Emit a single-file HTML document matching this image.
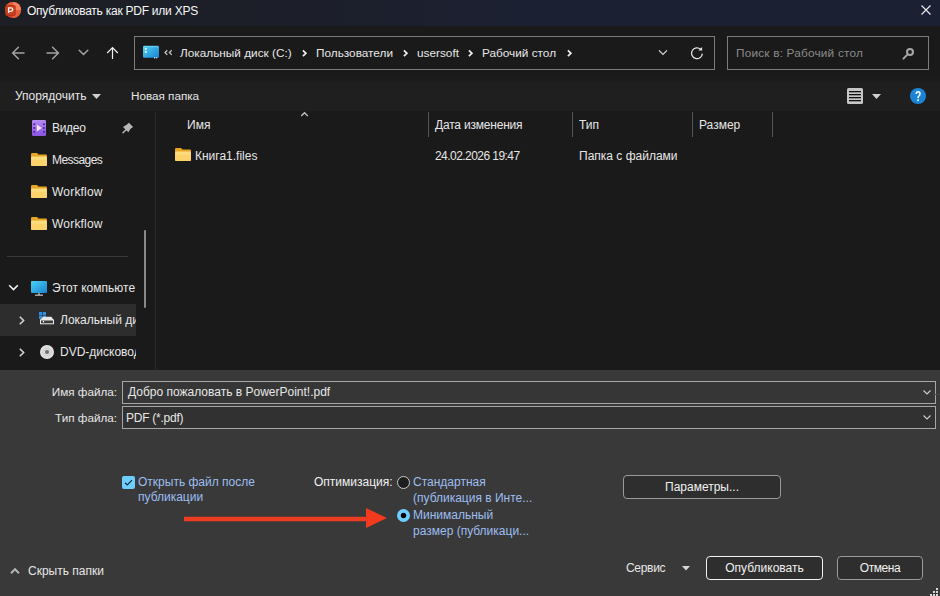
<!DOCTYPE html>
<html><head><meta charset="utf-8">
<style>
*{margin:0;padding:0;box-sizing:border-box}
html,body{width:940px;height:596px;overflow:hidden;background:#191919}
body{position:relative;font-family:"Liberation Sans",sans-serif;font-size:12px;color:#e6e6e6}
.a{position:absolute;white-space:nowrap;line-height:14px}
svg{position:absolute;overflow:visible}
#title{position:absolute;left:0;top:0;width:940px;height:26px;background:linear-gradient(90deg,#1e1f24 0%,#1c1f29 30%,#1b2033 60%,#1b2033 100%)}
#nav{position:absolute;left:0;top:26px;width:940px;height:54px;background:#1a1a1a}
#tool{position:absolute;left:0;top:76px;width:940px;height:35px;background:linear-gradient(180deg,#1a1a1a 0px,#1f1f1f 8px,#1f1f1f 100%)}
#content{position:absolute;left:0;top:111px;width:940px;height:259px;background:#1a1a1a}
#bottom{position:absolute;left:0;top:370px;width:940px;height:226px;background:#393939}
.box{position:absolute;border:1px solid #7c7c7c}
.inp{position:absolute;border:1px solid #a6a6a6;background:#343434}
.btn{position:absolute;border:1px solid #9a9a9a;border-radius:4px;background:#2e2e2e;text-align:center;color:#f0f0f0}
.blue{color:#9cbdf0}
</style></head><body>
<div id="title"></div>
<div id="nav"></div>
<div id="tool"></div>
<div id="content"></div>
<div id="bottom"></div>

<!-- title -->
<svg style="left:4px;top:1px" width="18" height="18" viewBox="0 0 18 18">
  <circle cx="9" cy="9" r="8.1" fill="#d9472a"/>
  <path d="M9 0.9A8.1 8.1 0 0 1 17.1 9H9Z" fill="#f3825f"/>
  <path d="M9 9H17.1A8.1 8.1 0 0 1 9 17.1Z" fill="#e3603f"/>
  <path d="M9 0.9A8.1 8.1 0 0 0 0.9 9H9Z" fill="#e45d3d"/>
  <rect x="1.8" y="4.6" width="9.4" height="9.8" rx="0.8" fill="#c8401f" stroke="#a92d14" stroke-width="0.8"/>
  <path d="M4.6 12V6.9H6.9Q8.8 6.9 8.8 8.6Q8.8 10.3 6.9 10.3H4.6" stroke="#fff5f0" stroke-width="1.3" fill="none"/>
</svg>
<div class="a" style="left:27px;top:4px;font-size:12px;letter-spacing:-0.24px;color:#f6f6f6">Опубликовать как PDF или XPS</div>
<svg style="left:921px;top:5px" width="10" height="10"><path d="M0.5 0.5L9.5 9.5M9.5 0.5L0.5 9.5" stroke="#f0f0f0" stroke-width="1.1"/></svg>

<!-- nav arrows -->
<svg style="left:8px;top:42px" width="56" height="22" viewBox="0 0 56 22"><path d="M16 11H4.8M10.4 5.2L4.6 11L10.4 16.8M39 11H50.2M44.6 5.2L50.4 11L44.6 16.8" stroke="#a2a2a2" stroke-width="1.5" fill="none" stroke-linecap="round"/></svg>
<svg style="left:76px;top:46px" width="14" height="12" viewBox="0 0 14 12"><path d="M3.2 4.2L7.5 8.5L11.8 4.2" stroke="#a2a2a2" stroke-width="1.5" fill="none" stroke-linecap="round"/></svg>
<svg style="left:106px;top:46px" width="14" height="14" viewBox="0 0 14 14"><path d="M6.5 13V1.8M1.2 7L6.5 1.7L11.8 7" stroke="#f0f0f0" stroke-width="1.2" fill="none"/></svg>

<!-- address -->
<div class="box" style="left:134px;top:36px;width:581px;height:34px"></div>
<svg style="left:143px;top:45px" width="17" height="14" viewBox="0 0 17 14"><defs><linearGradient id="ag" x1="0" y1="0" x2="1" y2="1"><stop offset="0" stop-color="#4fd2ef"/><stop offset="1" stop-color="#1a80d6"/></linearGradient></defs><rect x="0" y="0.8" width="16" height="12" rx="1.2" fill="url(#ag)"/><rect x="0.8" y="1.2" width="14.4" height="1" fill="#8ae4f8" opacity="0.6"/><rect x="1.8" y="3" width="2" height="1.8" fill="#d8f8ff"/><rect x="1.8" y="6" width="2" height="1.8" fill="#d8f8ff"/><rect x="11" y="12.2" width="1.2" height="1.2" fill="#cfefff"/><rect x="13" y="12.2" width="1.2" height="1.2" fill="#cfefff"/></svg>
<svg style="left:163px;top:49px" width="11" height="7" viewBox="0 0 11 7"><path d="M4.3 1.2L2 3.5L4.3 5.8M8.7 1.2L6.4 3.5L8.7 5.8" stroke="#c0c0c0" stroke-width="1.3" fill="none"/></svg>
<div class="a" style="left:180px;top:46px;font-size:11.8px">Локальный диск (C:)</div>
<svg style="left:302px;top:49px" width="5" height="8"><path d="M0.9 1.4L3.9 4.3L0.9 7.2" stroke="#ececec" stroke-width="1.75" fill="none"/></svg>
<div class="a" style="left:316px;top:46px;font-size:11.8px">Пользователи</div>
<svg style="left:403px;top:49px" width="5" height="8"><path d="M0.9 1.4L3.9 4.3L0.9 7.2" stroke="#ececec" stroke-width="1.75" fill="none"/></svg>
<div class="a" style="left:417px;top:46px;font-size:11.8px">usersoft</div>
<svg style="left:468px;top:49px" width="5" height="8"><path d="M0.9 1.4L3.9 4.3L0.9 7.2" stroke="#ececec" stroke-width="1.75" fill="none"/></svg>
<div class="a" style="left:482px;top:46px;font-size:11.8px">Рабочий стол</div>
<svg style="left:567px;top:49px" width="5" height="8"><path d="M0.9 1.4L3.9 4.3L0.9 7.2" stroke="#ececec" stroke-width="1.75" fill="none"/></svg>
<svg style="left:657px;top:48px" width="12" height="9" viewBox="0 0 12 9"><path d="M2 2.3L6 6.3L10 2.3" stroke="#dcdcdc" stroke-width="1.2" fill="none"/></svg>
<svg style="left:688px;top:44px" width="18" height="18" viewBox="0 0 18 18"><path d="M14.36 9.66A5.4 5.4 0 1 1 12.6 5.2" stroke="#e6e6e6" stroke-width="1.25" fill="none"/><path d="M14.1 2.9V6.6H10.4Z" fill="#e6e6e6"/></svg>

<!-- search -->
<div class="box" style="left:727px;top:36px;width:202px;height:34px"></div>
<div class="a" style="left:736px;top:46px;font-size:11.8px;letter-spacing:0.2px;color:#8a8a8a">Поиск в: Рабочий стол</div>
<svg style="left:898px;top:44px" width="20" height="20" viewBox="0 0 20 20"><circle cx="12" cy="8" r="2.95" stroke="#a6a6a6" stroke-width="2.1" fill="none"/><path d="M9.6 10.4L5.4 14.6" stroke="#a6a6a6" stroke-width="2" stroke-linecap="round"/></svg>

<!-- toolbar -->
<div class="a" style="left:15px;top:89px;font-size:12px">Упорядочить</div>
<svg style="left:92px;top:94px" width="9" height="5"><path d="M0 0H9L4.5 5Z" fill="#cfcfcf"/></svg>
<div class="a" style="left:131px;top:89px;font-size:11.7px">Новая папка</div>
<svg style="left:847px;top:88px" width="16" height="16" viewBox="0 0 16 16"><rect x="0" y="0" width="16" height="16" rx="1.5" fill="#c6c6c6"/><rect x="2" y="3" width="12" height="1.3" fill="#111"/><rect x="2" y="6" width="12" height="1.3" fill="#111"/><rect x="2" y="9" width="12" height="1.3" fill="#111"/><rect x="2" y="12" width="12" height="1.3" fill="#111"/></svg>
<svg style="left:872px;top:94px" width="9" height="5"><path d="M0 0H9L4.5 5Z" fill="#d0d0d0"/></svg>
<svg style="left:910px;top:88px" width="16" height="16" viewBox="0 0 16 16"><circle cx="8" cy="8" r="8" fill="#1b84d6"/><path d="M6.2 6Q6.2 3.7 8.1 3.7Q10 3.7 10 5.8Q10 7.1 9 7.8Q8.1 8.4 8.1 9.5V10.3" stroke="#fff" stroke-width="1.5" fill="none"/><rect x="7.3" y="11.4" width="1.6" height="1.7" fill="#fff"/></svg>

<!-- nav pane -->
<svg style="left:32px;top:120px" width="14" height="16" viewBox="0 0 14 16"><defs><linearGradient id="vg" x1="0" y1="0" x2="0" y2="1"><stop offset="0" stop-color="#b48cf2"/><stop offset="1" stop-color="#8a52e0"/></linearGradient></defs><rect x="0" y="0" width="14" height="16" rx="1.2" fill="url(#vg)"/><g fill="#4a1c9a"><rect x="1.4" y="3.4" width="1.8" height="1.6"/><rect x="1.4" y="7.2" width="1.8" height="1.6"/><rect x="1.4" y="11" width="1.8" height="1.6"/><rect x="11" y="3.4" width="1.8" height="1.6"/><rect x="11" y="7.2" width="1.8" height="1.6"/><rect x="11" y="11" width="1.8" height="1.6"/></g><path d="M4.8 4.6L9.8 8L4.8 11.4Z" fill="#f6eaff"/></svg>
<div class="a" style="left:52px;top:121px;letter-spacing:-0.3px">Видео</div>
<svg style="left:116px;top:116px" width="24" height="24" viewBox="0 0 24 24"><path d="M12.9 6.8L17.1 11L14.6 12.8L12.3 16.2L7 11L10.6 8.8Z" fill="#b6b6b6"/><path d="M10 13.8L7 16.8" stroke="#b6b6b6" stroke-width="1.5" stroke-linecap="round"/></svg>

<svg style="left:31px;top:153px" width="16" height="13" viewBox="0 0 16 13"><path d="M0 1.2Q0 0 1.2 0H6L7.5 1.5H14.8Q16 1.5 16 2.7V11.8Q16 13 14.8 13H1.2Q0 13 0 11.8Z" fill="#e8a523"/><rect x="0" y="3.4" width="16" height="9.6" rx="1.2" fill="#fbd36a"/><rect x="0.6" y="3.8" width="14.8" height="3" rx="1" fill="#fde08a" opacity="0.7"/></svg>
<div class="a" style="left:52px;top:153px;letter-spacing:-0.55px">Messages</div>
<svg style="left:31px;top:185px" width="16" height="13" viewBox="0 0 16 13"><path d="M0 1.2Q0 0 1.2 0H6L7.5 1.5H14.8Q16 1.5 16 2.7V11.8Q16 13 14.8 13H1.2Q0 13 0 11.8Z" fill="#e8a523"/><rect x="0" y="3.4" width="16" height="9.6" rx="1.2" fill="#fbd36a"/><rect x="0.6" y="3.8" width="14.8" height="3" rx="1" fill="#fde08a" opacity="0.7"/></svg>
<div class="a" style="left:52px;top:185px;letter-spacing:0.2px">Workflow</div>
<svg style="left:31px;top:217px" width="16" height="13" viewBox="0 0 16 13"><path d="M0 1.2Q0 0 1.2 0H6L7.5 1.5H14.8Q16 1.5 16 2.7V11.8Q16 13 14.8 13H1.2Q0 13 0 11.8Z" fill="#e8a523"/><rect x="0" y="3.4" width="16" height="9.6" rx="1.2" fill="#fbd36a"/><rect x="0.6" y="3.8" width="14.8" height="3" rx="1" fill="#fde08a" opacity="0.7"/></svg>
<div class="a" style="left:52px;top:217px;letter-spacing:0.2px">Workflow</div>

<div style="position:absolute;left:7px;top:256px;width:121px;height:1px;background:#3a3a3a"></div>

<svg style="left:8px;top:284px" width="11" height="8"><path d="M1.2 1.2L5.5 5.5L9.8 1.2" stroke="#f2f2f2" stroke-width="1.6" fill="none"/></svg>
<svg style="left:31px;top:281px" width="16" height="15" viewBox="0 0 16 15"><defs><linearGradient id="mg" x1="0" y1="0" x2="1" y2="1"><stop offset="0" stop-color="#4cd0f2"/><stop offset="1" stop-color="#1784d4"/></linearGradient></defs><rect x="0" y="0" width="16" height="12" rx="1" fill="url(#mg)"/><rect x="7.4" y="12" width="1.2" height="2" fill="#c8c8c8"/><rect x="4" y="13.6" width="8" height="1.1" fill="#d8d8d8"/></svg>
<div style="position:absolute;left:52px;top:281px;width:84px;height:14px;overflow:hidden"><div class="a" style="left:0;top:0">Этот компьюте</div></div>

<div style="position:absolute;left:0;top:304px;width:136px;height:32px;background:#2d2d2d"></div>
<svg style="left:19px;top:316px" width="6" height="9"><path d="M0.8 0.8L4.6 4.5L0.8 8.2" stroke="#d2d2d2" stroke-width="1.6" fill="none"/></svg>
<svg style="left:36px;top:308px" width="22" height="20" viewBox="0 0 22 20"><g fill="#2f8ee0"><rect x="3" y="4" width="3.2" height="3.2"/><rect x="6.8" y="4" width="3.2" height="3.2"/><rect x="3" y="7.6" width="3.2" height="3.2"/><rect x="6.8" y="7.6" width="3.2" height="3.2"/></g><path d="M4.4 12L6.8 8.7H15.4L17.6 12Z" fill="#e6e6e6"/><rect x="4.5" y="12" width="13" height="3.8" fill="#3a3a3a" stroke="#e8e8e8" stroke-width="1"/><rect x="6.8" y="13" width="1.3" height="1.3" fill="#fff"/></svg>
<div style="position:absolute;left:60px;top:313px;width:76px;height:14px;overflow:hidden"><div class="a" style="left:0;top:0">Локальный диск (C:)</div></div>

<svg style="left:19px;top:348px" width="6" height="9"><path d="M0.8 0.8L4.6 4.5L0.8 8.2" stroke="#d2d2d2" stroke-width="1.6" fill="none"/></svg>
<svg style="left:40px;top:345px" width="14" height="14" viewBox="0 0 14 14"><circle cx="7" cy="7" r="7" fill="#e4e4e4"/><circle cx="7" cy="7" r="5.5" fill="#d6d6d6"/><circle cx="7" cy="7" r="2" fill="#6e6e6e"/></svg>
<div style="position:absolute;left:60px;top:345px;width:76px;height:14px;overflow:hidden"><div class="a" style="left:0;top:0">DVD-дисковод (D:)</div></div>

<!-- scrollbar + divider -->
<div style="position:absolute;left:144px;top:230px;width:2px;height:78px;background:#8a8a8a;border-radius:1px"></div>
<div style="position:absolute;left:155px;top:112px;width:1px;height:258px;background:#2a2a2a"></div>

<!-- columns -->
<svg style="left:299px;top:110px" width="12" height="8"><path d="M2.2 6L5.5 2.7L8.8 6" stroke="#c4c4c4" stroke-width="1.3" fill="none"/></svg>
<div class="a" style="left:187px;top:118px">Имя</div>
<div style="position:absolute;left:428px;top:112px;width:1px;height:25px;background:#555"></div>
<div class="a" style="left:435px;top:118px;letter-spacing:-0.2px">Дата изменения</div>
<div style="position:absolute;left:572px;top:112px;width:1px;height:25px;background:#555"></div>
<div class="a" style="left:579px;top:118px">Тип</div>
<div style="position:absolute;left:692px;top:112px;width:1px;height:25px;background:#555"></div>
<div class="a" style="left:699px;top:118px">Размер</div>
<div style="position:absolute;left:772px;top:112px;width:1px;height:25px;background:#555"></div>

<svg style="left:175px;top:148px" width="16" height="13" viewBox="0 0 16 13"><path d="M0 1.2Q0 0 1.2 0H6L7.5 1.5H14.8Q16 1.5 16 2.7V11.8Q16 13 14.8 13H1.2Q0 13 0 11.8Z" fill="#e8a523"/><rect x="0" y="3.4" width="16" height="9.6" rx="1.2" fill="#fbd36a"/><rect x="0.6" y="3.8" width="14.8" height="3" rx="1" fill="#fde08a" opacity="0.7"/></svg>
<div class="a" style="left:195px;top:149px">Книга1.files</div>
<div class="a" style="left:435px;top:149px;letter-spacing:-0.55px">24.02.2026 19:47</div>
<div class="a" style="left:579px;top:149px">Папка с файлами</div>

<!-- bottom -->
<div class="a" style="right:823px;top:385px;font-size:11.7px">Имя файла:</div>
<div class="inp" style="left:122px;top:381px;width:814px;height:23px;background:#363636"></div>
<div class="a" style="left:128px;top:385px">Добро пожаловать в PowerPoint!.pdf</div>
<svg style="left:923px;top:390px" width="8" height="5"><path d="M0.5 0.5L4 4L7.5 0.5" stroke="#cfcfcf" stroke-width="1.1" fill="none"/></svg>
<div style="position:absolute;left:933px;top:394px;width:7px;height:1px;background:#464646"></div>
<div class="a" style="right:823px;top:411px;font-size:11.7px">Тип файла:</div>
<div class="inp" style="left:122px;top:406px;width:814px;height:23px;background:#313131"></div>
<div class="a" style="left:126px;top:411px;letter-spacing:-0.25px">PDF (*.pdf)</div>
<svg style="left:923px;top:415px" width="8" height="5"><path d="M0.5 0.5L4 4L7.5 0.5" stroke="#cfcfcf" stroke-width="1.1" fill="none"/></svg>

<svg style="left:122px;top:476px" width="13" height="13" viewBox="0 0 13 13"><rect x="0" y="0" width="13" height="13" rx="2" fill="#6ccfff"/><path d="M3 6.8L5.3 9L10 4.2" stroke="#0a2a40" stroke-width="1.2" fill="none"/></svg>
<div class="a blue" style="left:138px;top:475px">Открыть файл после</div>
<div class="a blue" style="left:138px;top:490px">публикации</div>

<div class="a" style="left:314px;top:475px;color:#f0f0f0">Оптимизация:</div>
<svg style="left:397px;top:476px" width="13" height="13" viewBox="0 0 13 13"><circle cx="6.5" cy="6.5" r="6" fill="#1e1e1e" stroke="#cacaca" stroke-width="1"/></svg>
<div class="a blue" style="left:413px;top:475px">Стандартная</div>
<div class="a blue" style="left:413px;top:491px">(публикация в Инте...</div>

<svg style="left:397px;top:509px" width="13" height="13" viewBox="0 0 13 13"><circle cx="6.5" cy="6.5" r="6.5" fill="#6ccfff"/><circle cx="6.5" cy="6.5" r="2.7" fill="#000"/></svg>
<div class="a blue" style="left:413px;top:508px">Минимальный</div>
<div class="a blue" style="left:413px;top:524px">размер (публикаци...</div>

<svg style="left:183px;top:507px" width="205" height="22" viewBox="0 0 205 22"><path d="M1 12H185" stroke="#ec3c22" stroke-width="4.6"/><path d="M183 1L204 11L183 21Z" fill="#f23a1c"/></svg>

<div class="btn" style="left:623px;top:475px;width:158px;height:24px;line-height:22px">Параметры...</div>

<svg style="left:10px;top:568px" width="10" height="6"><path d="M1 5.2L5 1.2L9 5.2" stroke="#b4b4b4" stroke-width="2" fill="none"/></svg>
<div class="a" style="left:28px;top:564px">Скрыть папки</div>

<div class="a" style="left:626px;top:561px;letter-spacing:-0.3px">Сервис</div>
<svg style="left:682px;top:566px" width="8" height="5"><path d="M0 0H8L4 4.5Z" fill="#d8d8d8"/></svg>
<div class="btn" style="left:706px;top:556px;width:117px;height:24px;line-height:22px;border:1px solid #f2f2f2">Опубликовать</div>
<div class="btn" style="left:837px;top:556px;width:86px;height:24px;line-height:22px;letter-spacing:-0.45px">Отмена</div>

<svg style="left:927px;top:586px" width="12" height="10"><g fill="#d8d8d8"><rect x="9" y="2" width="2" height="2"/><rect x="6" y="5" width="2" height="2"/><rect x="9" y="5" width="2" height="2"/><rect x="3" y="8" width="2" height="2"/><rect x="6" y="8" width="2" height="2"/><rect x="9" y="8" width="2" height="2"/></g></svg>
</body></html>
